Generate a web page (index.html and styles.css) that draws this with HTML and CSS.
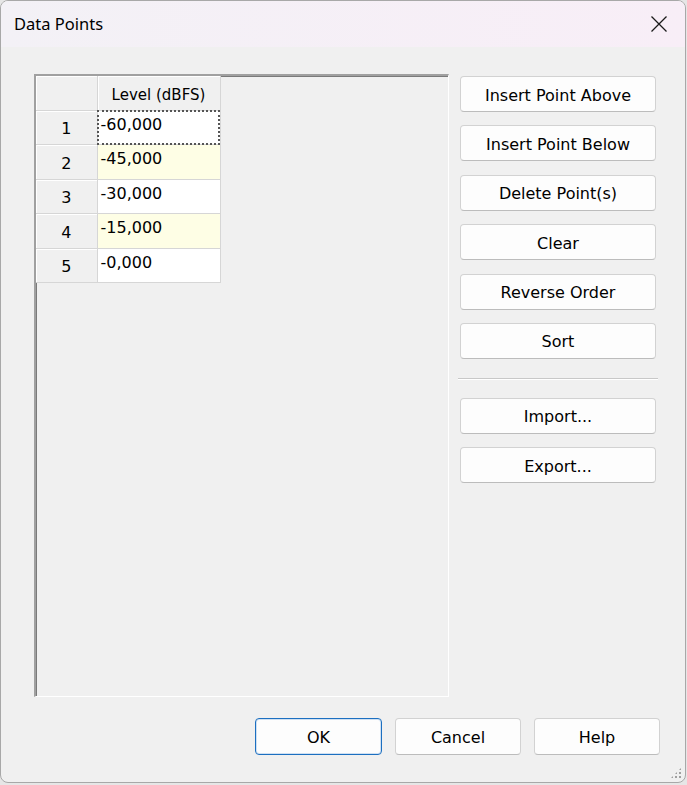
FILE: index.html
```html
<!DOCTYPE html>
<html>
<head>
	<title>Data Points</title>
	<link rel="stylesheet" href="styles.css">
</head>
<body>

<div class="window">
	<div class="titlebar">
		<span class="title">Data Points</span>
		<svg class="close" width="18" height="18" viewBox="0 0 18 18">
			<path d="M1.5 1.5 L16.5 16.5 M16.5 1.5 L1.5 16.5" stroke="#1a1a1a" stroke-width="1.3" fill="none"/>
		</svg>
	</div>

	<div class="content">
		<div class="main">
			<div class="gridpanel">
				<table class="grid">
					<tr>
						<th class="corner"></th>
						<th class="colhead">Level (dBFS)</th>
					</tr>
					<tr>
						<th class="rowhead">1</th>
						<td class="cell focus">-60,000</td>
					</tr>
					<tr>
						<th class="rowhead">2</th>
						<td class="cell alt">-45,000</td>
					</tr>
					<tr>
						<th class="rowhead">3</th>
						<td class="cell">-30,000</td>
					</tr>
					<tr>
						<th class="rowhead">4</th>
						<td class="cell alt">-15,000</td>
					</tr>
					<tr>
						<th class="rowhead">5</th>
						<td class="cell">-0,000</td>
					</tr>
				</table>
			</div>

			<div class="side">
				<button class="btn">Insert Point Above</button>
				<button class="btn">Insert Point Below</button>
				<button class="btn">Delete Point(s)</button>
				<button class="btn">Clear</button>
				<button class="btn">Reverse Order</button>
				<button class="btn">Sort</button>
				<div class="sep"></div>
				<button class="btn">Import...</button>
				<button class="btn">Export...</button>
			</div>
		</div>

		<div class="bottom">
			<button class="btn dlg default">OK</button>
			<button class="btn dlg">Cancel</button>
			<button class="btn dlg">Help</button>
		</div>
	</div>

	<div class="grip"></div>
</div>

</body>
</html>
```

FILE: styles.css
```css
		*{
			box-sizing: border-box;
		}
		body{
			margin: 0;
			background: #e6e6e6;
			font-family: "DejaVu Sans", sans-serif;
			font-size: 16px;
			color: #000;
		}
		.window{
			position: relative;
			width: 686px;
			height: 783px;
			margin: 0;
			background: #f0f0f0;
			border: 1px solid #a8a8a8;
			border-radius: 8px;
			overflow: hidden;
		}
		.titlebar{
			height: 46px;
			display: flex;
			align-items: center;
			justify-content: space-between;
			padding: 0 17px 0 13px;
			background: linear-gradient(to right, #f3f1f6, #f8eef7);
		}
		.title{
			font-family: "Noto Sans", "Open Sans", sans-serif;
			font-size: 16.5px;
			padding-bottom: 2px;
		}
		.close{
			display: block;
		}

		.content{
			padding: 27px 0 0 33px;
		}
		.main{
			display: flex;
			gap: 11px;
		}

		/* grid box, sunken */
		.gridpanel{
			width: 415px;
			height: 623px;
			border-top: 2px solid #a0a0a0;
			border-left: 2px solid #a0a0a0;
			border-right: 1px solid #fff;
			border-bottom: 1px solid #fff;
			box-shadow: inset 1px 1px 0 #7a7a7a;
			background: #f0f0f0;
		}
		.grid{
			border-collapse: collapse;
		}
		.grid th, .grid td{
			padding: 0;
			font-weight: normal;
			height: 34.5px;
			border: 1px solid #d6d6d6;
		}
		.grid tr:first-child th{
			border-top: none;
			height: 34px;
		}
		.grid th:first-child{
			border-left: none;
		}
		.corner, .rowhead, .colhead{
			background: #f0f0f0;
			box-shadow: inset 1px 1px 0 #fff;
		}
		.corner{
			width: 61px;
		}
		.colhead{
			width: 123px;
			font-size: 15px;
			text-align: center;
			vertical-align: middle;
			padding-top: 4px !important;
		}
		.rowhead{
			text-align: center;
			vertical-align: bottom;
			padding-bottom: 6px !important;
		}
		.cell{
			background: #fff;
			vertical-align: top;
			padding: 4px 0 0 3px !important;
		}
		.cell.alt{
			background: #fefee5;
		}
		.cell.focus{
			outline: 2px dotted #555;
			outline-offset: -2px;
		}

		/* buttons */
		.side{
			display: flex;
			flex-direction: column;
			gap: 13.4px;
			width: 196px;
			padding-top: 2px;
		}
		.btn{
			font-family: inherit;
			font-size: 16px;
			height: 36px;
			background: #fdfdfd;
			border: 1px solid #d2d2d2;
			border-bottom-color: #bcbcbc;
			border-radius: 4px;
			color: #000;
			padding: 2px 0 0 0;
		}
		.sep{
			height: 2px;
			margin: 6px -2px 4px -2px;
			border-top: 1px solid #c8c8c8;
			border-bottom: 1px solid #fff;
		}
		.bottom{
			display: flex;
			justify-content: flex-end;
			gap: 13px;
			padding: 21px 25px 0 0;
		}
		.dlg{
			width: 126px;
			height: 37px;
		}
		.dlg.default{
			width: 127px;
			border: 1px solid #1c6fc0;
			box-shadow: inset 0 0 0 1px #cfe0f2;
		}

		.grip{
			position: absolute;
			right: 3px;
			bottom: 3px;
			width: 12px;
			height: 12px;
			background:
				radial-gradient(circle, #a0a0a0 1.2px, transparent 1.5px) 0 0 / 4px 4px;
			clip-path: polygon(100% 0, 100% 100%, 0 100%);
		}
```
